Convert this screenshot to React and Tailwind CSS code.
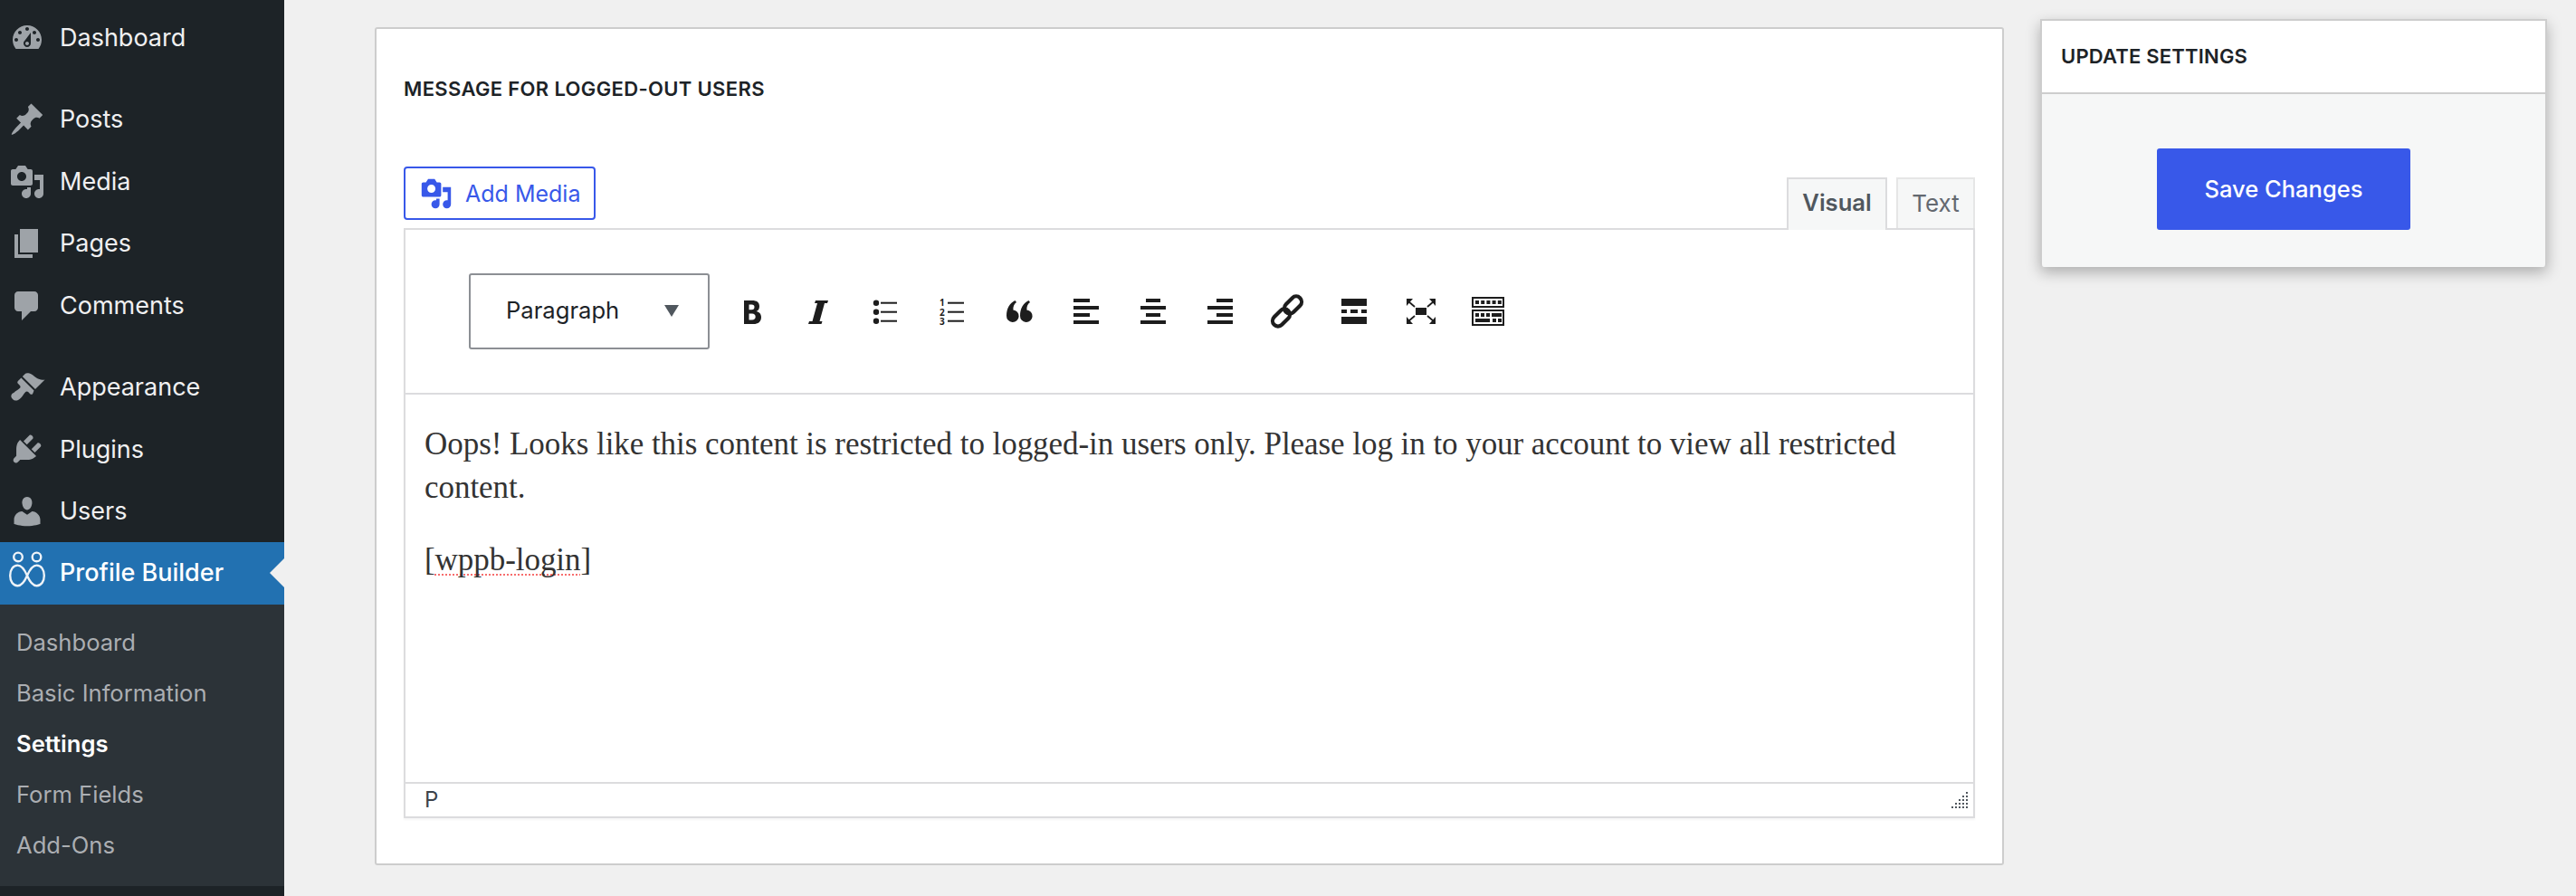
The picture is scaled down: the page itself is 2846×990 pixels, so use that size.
import React from "react";

const P = {
  dashboard: "M3.76 16h12.48c1.1-1.37 1.76-3.11 1.76-5 0-4.42-3.58-8-8-8s-8 3.58-8 8c0 1.89.66 3.63 1.76 5zM10 4c.55 0 1 .45 1 1s-.45 1-1 1-1-.45-1-1 .45-1 1-1zM6 6c.55 0 1 .45 1 1s-.45 1-1 1-1-.45-1-1 .45-1 1-1zm8 0c.55 0 1 .45 1 1s-.45 1-1 1-1-.45-1-1 .45-1 1-1zm-5.37 5.55L12 7v6c0 1.1-.9 2-2 2s-2-.9-2-2c0-.57.24-1.08.63-1.45zM4 10c.55 0 1 .45 1 1s-.45 1-1 1-1-.45-1-1 .45-1 1-1zm12 0c.55 0 1 .45 1 1s-.45 1-1 1-1-.45-1-1 .45-1 1-1zm-5 3c0-.55-.45-1-1-1s-1 .45-1 1 .45 1 1 1 1-.45 1-1z",
  post: "M10.44 3.02l1.82-1.82 6.36 6.35-1.83 1.82c-1.05-.68-2.48-.57-3.41.36l-.75.75c-.92.93-1.04 2.35-.35 3.41l-1.83 1.82-2.41-2.41-2.8 2.79c-.42.42-3.38 2.71-3.8 2.29s1.86-3.39 2.28-3.81l2.79-2.79L4.1 9.36l1.83-1.82c1.05.69 2.48.57 3.41-.36l.75-.75c.93-.92 1.05-2.35.35-3.41z",
  media: "M13 11V4c0-.55-.45-1-1-1h-1.67L9 1H5L3.67 3H2c-.55 0-1 .45-1 1v7c0 .55.45 1 1 1h10c.55 0 1-.45 1-1zM7 4.5c1.38 0 2.5 1.12 2.5 2.5S8.38 9.5 7 9.5 4.5 8.38 4.5 7 5.62 4.5 7 4.5zM14 6h5v10.5c0 1.38-1.12 2.5-2.5 2.5S14 17.88 14 16.5s1.12-2.5 2.5-2.5c.17 0 .34.02.5.05V9h-3V6zm-4 8.05V13h2v3.5c0 1.38-1.12 2.5-2.5 2.5S7 17.88 7 16.5 8.12 14 9.5 14c.17 0 .34.02.5.05z",
  page: "M6 15V2h10v13H6zm-1 1h8v2H3V5h2v11z",
  comments: "M5 2h9c1.1 0 2 .9 2 2v7c0 1.1-.9 2-2 2h-2l-5 5v-5H5c-1.1 0-2-.9-2-2V4c0-1.1.9-2 2-2z",
  appearance: "M14.48 11.06L7.41 3.99l1.5-1.5c.5-.56 2.3-.47 3.51.32 1.21.8 1.43 1.28 2.91 2.1 1.18.64 2.45 1.26 4.45.85zm-.71.71L6.7 4.7 4.93 6.47c-.39.39-.39 1.02 0 1.41l1.06 1.06c.39.39.39 1.03 0 1.42-.6.6-1.43 1.11-2.21 1.69-.35.26-.7.53-1.01.84C1.43 13.23.4 14.98 2 16.5c1.52 1.59 3.27.56 4.61-.77.31-.31.58-.66.84-1.01.58-.78 1.09-1.61 1.69-2.21.39-.39 1.03-.39 1.42 0l1.06 1.06c.39.39 1.02.39 1.41 0z",
  plugins: "M13.11 4.36L9.87 7.6 8 5.73l3.24-3.24c.35-.34 1.05-.2 1.56.32.52.51.66 1.21.31 1.55zm-8 1.77l.91-1.12 9.01 9.01-1.19.84c-.71.71-2.63 1.16-3.82 1.16H6.14L4.9 17.26c-.59.59-1.54.59-2.12 0-.59-.58-.59-1.53 0-2.12l1.24-1.24v-3.88c0-1.13.4-3.19 1.09-3.89zm7.26 3.97l3.24-3.24c.34-.35 1.04-.21 1.55.31.52.51.66 1.21.31 1.55l-3.24 3.25z",
  users: "M10 9.25c-2.27 0-2.73-3.44-2.73-3.44C7 4.02 7.82 2 9.97 2c2.16 0 2.98 2.02 2.71 3.81 0 0-.41 3.44-2.68 3.44zm0 2.57L12.72 10c2.39 0 4.52 2.33 4.52 4.53v2.49s-3.65 1.13-7.24 1.13c-3.65 0-7.24-1.13-7.24-1.13v-2.49c0-2.25 1.94-4.48 4.47-4.48z",
};

function Dash({ d, className }) {
  return (
    <svg viewBox="0 0 20 20" className={className} fill="currentColor">
      <path d={d} />
    </svg>
  );
}

function MenuItem({ icon, label, className = "" }) {
  return (
    <div className={"flex h-[68.6px] items-center pl-[10px] text-[27px] text-[#f0f0f1] " + className}>
      <Dash d={icon} className="h-10 w-10 text-[#9ea3a8]" />
      <span className="ml-[16px] pt-[1px]">{label}</span>
    </div>
  );
}

function Tool({ children }) {
  return (
    <div className="flex w-[74px] items-center justify-center">
      <svg viewBox="0 0 40 40" className="h-10 w-10" fill="#1d1d1d">
        {children}
      </svg>
    </div>
  );
}

const dots = [];
for (let row = 0; row < 5; row++) {
  for (let col = 4 - row; col < 5; col++) {
    dots.push(<rect key={row + "-" + col} x={col * 4} y={row * 4} width="2" height="2" />);
  }
}

function Corner({ t }) {
  return (
    <g transform={t}>
      <polygon points="4,6 11,6 4,14" />
      <line x1="6" y1="9" x2="13" y2="15" stroke="#1d1d1d" strokeWidth="1.8" />
    </g>
  );
}

export default function App() {
  return (
    <div className="flex h-[990px] w-[2846px] overflow-hidden bg-[#f0f0f0] font-[Inter]">
      <aside className="flex w-[314px] shrink-0 flex-col bg-[#1d2327] pt-[7.7px]">
        <MenuItem icon={P.dashboard} label="Dashboard" />
        <MenuItem icon={P.post} label="Posts" className="mt-[21.4px]" />
        <MenuItem icon={P.media} label="Media" />
        <MenuItem icon={P.page} label="Pages" />
        <MenuItem icon={P.comments} label="Comments" />
        <MenuItem icon={P.appearance} label="Appearance" className="mt-[21.4px]" />
        <MenuItem icon={P.plugins} label="Plugins" />
        <MenuItem icon={P.users} label="Users" />
        <div className="relative flex h-[68.6px] items-center bg-[#2271b1] pl-[10px] text-[27px] font-medium text-white">
          <svg viewBox="0 0 40 40" className="h-10 w-10 overflow-visible" fill="none" stroke="#eef3f8" strokeWidth="2.4">
            <circle cx="10" cy="1.4" r="4.8" />
            <circle cx="30.5" cy="1.4" r="4.8" />
            <path d="M20 22 C17 15 14 10.6 9.5 10.6 C4.5 10.6 1.2 15.5 1.2 22 C1.2 28.5 4.5 33.2 9.5 33.2 C14 33.2 17 29 20 22 C23 15 26 10.6 30.5 10.6 C35.5 10.6 38.8 15.5 38.8 22 C38.8 28.5 35.5 33.2 30.5 33.2 C26 33.2 23 29 20 22 Z" />
          </svg>
          <span className="ml-[16px]">Profile Builder</span>
          <div className="absolute right-0 top-[18px] h-0 w-0 border-y-[16px] border-r-[16px] border-y-transparent border-r-[#f0f0f0]" />
        </div>
        <div className="bg-[#2c3338] pb-[16px] pl-[18px] pt-[14px] text-[25.6px] text-[#abaeb2]">
          <div className="flex h-[56.2px] items-center">Dashboard</div>
          <div className="flex h-[56.2px] items-center">Basic Information</div>
          <div className="flex h-[56.2px] items-center font-semibold text-white">Settings</div>
          <div className="flex h-[56.2px] items-center">Form Fields</div>
          <div className="flex h-[56.2px] items-center">Add-Ons</div>
        </div>
      </aside>

      <main className="flex items-start gap-[40px] pl-[100px] pt-[21px]">
        <section className="mt-[9px] h-[926px] w-[1800px] rounded-[3px] border-2 border-[#cdcdcd] bg-white pl-[30px] pr-[30px] pt-[50px]">
          <h2 className="h-8 text-[22px] font-semibold leading-8 tracking-[0.35px] text-[#1d2327]">MESSAGE FOR LOGGED-OUT USERS</h2>
          <div className="mt-[70px] flex h-[68px] items-start justify-between">
            <button className="flex h-[59px] w-[212px] items-center rounded-[4px] border-2 border-[#3858e9] pl-[16px] text-[25px] text-[#3858e9]">
              <Dash d={P.media} className="h-9 w-9" />
              <span className="ml-[14px] pt-[2px]">Add Media</span>
            </button>
            <div className="relative z-10 flex gap-[10px] self-end">
              <div className="-mb-[2px] flex h-[58px] w-[111px] items-center justify-center border-2 border-b-0 border-[#dcdcde] bg-[#f6f7f7] pb-[4px] text-[25.6px] font-semibold text-[#50575e]">Visual</div>
              <div className="flex h-[56px] w-[87px] items-center justify-center border-2 border-b-0 border-[#e6e6e6] bg-[#f6f7f7] pb-[2px] text-[26px] text-[#646970]">Text</div>
            </div>
          </div>
          <div className="h-[652px] w-[1736px] border-2 border-[#dcdcde] shadow-[0_2px_2px_rgba(0,0,0,0.04)]">
            <div className="flex h-[182px] items-center border-b-2 border-[#dcdcde] pl-[70px]">
              <div className="mr-[9px] flex h-[84px] w-[266px] items-center justify-between rounded-[3px] border-2 border-[#8c8f94] pb-[2px] pl-[39px] pr-[32px] text-[25.6px] text-[#1d2327]">
                <span>Paragraph</span>
                <span className="h-0 w-0 border-x-[8px] border-t-[13px] border-x-transparent border-t-[#50575e]" />
              </div>
              <Tool>
                <path fillRule="evenodd" d="M12 8 h9 c5 0 8 2 8 6.5 c0 3-1.5 5-3.5 5.5 c3 .5 5.5 2.6 5.5 6.5 c0 5-3.5 7.5-8.5 7.5 H12 Z M17.5 12.5 v5.7 h3 c2 0 3-1 3-2.9 c0-1.8-1-2.8-3-2.8 Z M17.5 22.5 v7 h3.5 c2.2 0 3.7-1.2 3.7-3.5 c0-2.3-1.5-3.5-3.7-3.5 Z" />
              </Tool>
              <Tool>
                <path d="M17 8 H31 L30 11 H27 L21.5 31 H24.5 L23.5 34 H9 L10 31 H13.5 L19 11 H16 Z" />
              </Tool>
              <Tool>
                <circle cx="10" cy="10.7" r="3.2" />
                <circle cx="10" cy="20.7" r="3.2" />
                <circle cx="10" cy="30.7" r="3.2" />
                <rect x="15" y="9.7" width="18" height="2" />
                <rect x="15" y="19.7" width="18" height="2" />
                <rect x="15" y="29.7" width="18" height="2" />
              </Tool>
              <Tool>
                <text x="6" y="14" fontSize="10" fontWeight="700" fontFamily="Open Sans">1</text>
                <text x="6" y="24.5" fontSize="10" fontWeight="700" fontFamily="Open Sans">2</text>
                <text x="6" y="35" fontSize="10" fontWeight="700" fontFamily="Open Sans">3</text>
                <rect x="15" y="9.7" width="18" height="2" />
                <rect x="15" y="19.7" width="18" height="2" />
                <rect x="15" y="29.7" width="18" height="2" />
              </Tool>
              <Tool>
                <path d="M15.5 8 C9.5 11 6 16.5 6 25 a6.8 6.8 0 1 0 7.4 -6.6 C13.2 14.5 14.4 12 17 10 Z" />
                <path d="M30.5 8 C24.5 11 21 16.5 21 25 a6.8 6.8 0 1 0 7.4 -6.6 C28.2 14.5 29.4 12 32 10 Z" />
              </Tool>
              <Tool>
                <rect x="6" y="6" width="18" height="4" />
                <rect x="6" y="14" width="28" height="4" />
                <rect x="6" y="22" width="18" height="4" />
                <rect x="6" y="30" width="28" height="4" />
              </Tool>
              <Tool>
                <rect x="12" y="6" width="16" height="4" />
                <rect x="6" y="14" width="28" height="4" />
                <rect x="12" y="22" width="16" height="4" />
                <rect x="6" y="30" width="28" height="4" />
              </Tool>
              <Tool>
                <rect x="16" y="6" width="18" height="4" />
                <rect x="6" y="14" width="28" height="4" />
                <rect x="16" y="22" width="18" height="4" />
                <rect x="6" y="30" width="28" height="4" />
              </Tool>
              <Tool>
                <g fill="none" stroke="#1d1d1d" strokeWidth="4.2">
                  <rect x="15.5" y="7" width="22" height="12" rx="6" transform="rotate(-45 26.5 13)" />
                  <rect x="2.5" y="21" width="22" height="12" rx="6" transform="rotate(-45 13.5 27)" />
                </g>
              </Tool>
              <Tool>
                <rect x="6" y="6" width="28" height="8" />
                <rect x="6" y="18" width="6" height="4" />
                <rect x="16" y="18" width="8" height="4" />
                <rect x="28" y="18" width="6" height="4" />
                <rect x="6" y="26" width="28" height="8" />
              </Tool>
              <Tool>
                <rect x="14" y="16" width="12" height="8" />
                <Corner t="" />
                <Corner t="translate(40 0) scale(-1 1)" />
                <Corner t="translate(0 40) scale(1 -1)" />
                <Corner t="translate(40 40) scale(-1 -1)" />
              </Tool>
              <Tool>
                <rect x="3" y="5" width="34" height="10" fill="none" stroke="#1d1d1d" strokeWidth="2" />
                <rect x="3" y="19" width="34" height="16" fill="none" stroke="#1d1d1d" strokeWidth="2" />
                <rect x="6" y="8" width="4" height="4" />
                <rect x="12.2" y="8" width="4" height="4" />
                <rect x="18.4" y="8" width="4" height="4" />
                <rect x="24.6" y="8" width="4" height="4" />
                <rect x="30.8" y="8" width="4" height="4" />
                <rect x="6" y="22" width="4" height="4" />
                <rect x="12" y="22" width="4" height="4" />
                <rect x="18" y="22" width="4" height="4" />
                <rect x="24" y="22" width="11" height="4" />
                <rect x="6" y="28" width="16" height="4" />
                <rect x="25" y="28" width="4" height="4" />
                <rect x="31" y="28" width="4" height="4" />
              </Tool>
            </div>
            <div className="h-[430px] border-b-2 border-[#dcdcde] pl-[21px] pt-[31px] font-['Liberation_Serif',serif] text-[35px] leading-[48px] tracking-[-0.05px] text-[#333333]">
              <p className="whitespace-nowrap">
                Oops! Looks like this content is restricted to logged-in users only. Please log in to your account to view all restricted
                <br />
                content.
              </p>
              <p className="mt-[32px]">
                [<span className="underline decoration-[#f76d6d] decoration-dotted decoration-2 underline-offset-[4px] [text-decoration-skip-ink:none]">wppb-login</span>]
              </p>
            </div>
            <div className="flex h-[36px] items-center justify-between pl-[21px] pr-[6px] text-[24px] text-[#3c434a]">
              <span>P</span>
              <svg width="18" height="18" viewBox="0 0 18 18" fill="#50575e">{dots}</svg>
            </div>
          </div>
        </section>

        <aside className="h-[274px] w-[560px] rounded-b-[4px] border-2 border-b-0 border-[#cdcdcd] bg-[#f6f7f7] shadow-[0_6px_16px_rgba(0,0,0,0.28)]">
          <div className="flex h-[81px] items-center border-b-2 border-[#cdcdcd] bg-white pl-[21px] text-[22px] font-semibold tracking-[0.2px] text-[#1d2327]">UPDATE SETTINGS</div>
          <div className="flex justify-center pr-[22px] pt-[60px]">
            <button className="h-[90px] w-[280px] rounded-[3px] bg-[#3858e9] text-[25.5px] font-medium text-white">Save Changes</button>
          </div>
        </aside>
      </main>
    </div>
  );
}
